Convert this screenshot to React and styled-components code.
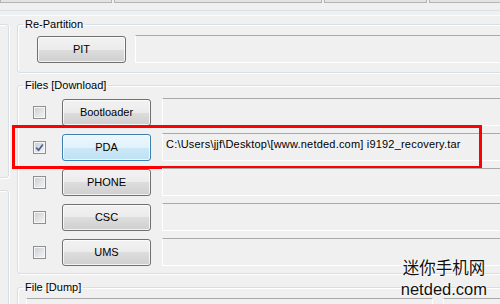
import React from 'react';
import styled, { createGlobalStyle } from 'styled-components';

const GlobalStyle = createGlobalStyle`
  html, body {
    margin: 0;
    padding: 0;
    background: #f0f0f0;
  }

  body {
    font-family: "Liberation Sans", Arial, sans-serif;
    font-size: 11px;
    color: #000;
  }
`;

const Window = styled.div`
  position: relative;
  width: 500px;
  height: 304px;
  overflow: hidden;
  background: #f0f0f0;
`;

const TabStrip = styled.div`
  display: flex;
  gap: 2px;
  height: 3px;
`;

const Tab = styled.div`
  flex: 0 0 ${(props) => props.w}px;
  box-sizing: border-box;
  height: 3px;
  background: #e3e3e3;
  border: 1px solid #b4b4b4;
  border-top: none;
`;

const PanelEdge = styled.div`
  margin-top: 7px;
  height: 4px;
  border-top: 1px solid #d8e1e8;
  border-bottom: 1px solid #fbfbfb;
`;

const Body = styled.div`
  display: flex;
  align-items: flex-start;
`;

const SideStrip = styled.div`
  flex: 0 0 9px;
  display: flex;
  flex-direction: column;
`;

const SideBox = styled.div`
  box-sizing: border-box;
  width: 19px;
  height: ${(props) => props.h}px;
  margin: ${(props) => props.top}px 0 0 -10px;
  border: 1px solid #d5dfe5;
  border-radius: 3px;
  box-shadow: inset 1px 1px 0 #fff, 1px 1px 0 #fff;
`;

const Content = styled.div`
  flex: 0 0 560px;
  margin: 1px 0 0 8px;
`;

const Group = styled.fieldset`
  margin: ${(props) => props.top || 0}px 0 0;
  padding: 0;
  min-width: 0;
  border: 1px solid #d5dfe5;
  border-radius: 3px;
  box-shadow: inset 1px 1px 0 #fff, 1px 1px 0 #fff;
`;

const Legend = styled.legend`
  margin-left: 5px;
  padding: 0 2px;
  font-size: 11px;
  line-height: 14px;
`;

const GroupBody = styled.div`
  display: flex;
  flex-direction: column;
  gap: 7px;
  padding: ${(props) => props.pad};
`;

const Row = styled.div`
  position: relative;
  display: flex;
  align-items: center;
  height: 28px;
`;

const CheckBox = styled.span`
  flex: 0 0 13px;
  box-sizing: border-box;
  display: flex;
  align-items: center;
  justify-content: center;
  width: 13px;
  height: 13px;
  margin-right: 16px;
  border: 1px solid #8e8f8f;
  background: linear-gradient(135deg, #c9cdd2, #f5f5f5);
  box-shadow: inset 0 0 0 1px #f6f6f6;
`;

const Button = styled.button`
  flex: 0 0 89px;
  height: 27px;
  padding: 0;
  font-family: "Liberation Sans", Arial, sans-serif;
  font-size: 11px;
  color: #000;
  border: 1px solid ${(props) => (props.focused ? '#3c7fb1' : '#707070')};
  border-radius: 3px;
  background: ${(props) => (props.focused
    ? 'linear-gradient(#ecf7fd, #e1f2fb 50%, #cbe8f8 50%, #bfe1f3)'
    : 'linear-gradient(#f2f2f2, #ebebeb 50%, #dddddd 50%, #cfcfcf)')};
  box-shadow: inset 0 0 0 1px rgba(255, 255, 255, 0.75);
`;

// the path text is drawn a little wider than the labels, like Tahoma
const TextField = styled.div`
  flex: 0 0 ${(props) => props.w || 600}px;
  box-sizing: border-box;
  height: 28px;
  margin-left: ${(props) => props.gap || 0}px;
  padding: 4px 3px;
  line-height: 13px;
  letter-spacing: 0.2px;
  white-space: nowrap;
  background: #f0f0f0;
  border: 1px solid #fff;
  border-top-color: #a9a9a9;
`;

const Highlight = styled.div`
  position: absolute;
  left: -21px;
  top: -8px;
  box-sizing: border-box;
  width: 470px;
  height: 44px;
  border: 3px solid #ff0000;
  pointer-events: none;
`;

const Watermark = styled.div`
  position: absolute;
  right: 13px;
  bottom: 4px;
  text-align: center;
  font-family: "Liberation Sans", "Noto Sans CJK SC", sans-serif;
  font-size: 16.5px;
  line-height: 21px;
  color: #111;
  text-shadow: 0 0 2px #fff, 0 0 2px #fff, 0 0 1px #fff;
`;

const Tick = () => (
  <svg width="9" height="9" viewBox="0 0 9 9">
    <path d="M1.2 4.6 L3.6 7.2 L7.8 1.4" fill="none" stroke="#4a5d93" strokeWidth="1.7" />
  </svg>
);

const files = [
  { name: 'Bootloader' },
  { name: 'PDA', checked: true, path: 'C:\\Users\\jjf\\Desktop\\[www.netded.com] i9192_recovery.tar' },
  { name: 'PHONE' },
  { name: 'CSC' },
  { name: 'UMS' },
];

export default function App() {
  return (
    <Window>
      <GlobalStyle />
      <TabStrip>
        <Tab w={112} />
        <Tab w={208} />
        <Tab w={103} />
        <Tab w={120} />
      </TabStrip>
      <PanelEdge />
      <Body>
        <SideStrip>
          <SideBox top={8} h={154} />
          <SideBox top={12} h={200} />
        </SideStrip>
        <Content>
          <Group>
            <Legend>Re-Partition</Legend>
            <GroupBody pad="4px 0 9px 19px">
              <Row>
                <Button>PIT</Button>
                <TextField gap={9} />
              </Row>
            </GroupBody>
          </Group>

          <Group top={5}>
            <Legend>Files [Download]</Legend>
            <GroupBody pad="6px 0 7px 15px">
              {files.map((f) => (
                <Row key={f.name}>
                  <CheckBox>{f.checked && <Tick />}</CheckBox>
                  <Button focused={f.checked}>{f.name}</Button>
                  <TextField gap={11}>{f.path}</TextField>
                  {f.checked && <Highlight />}
                </Row>
              ))}
            </GroupBody>
          </Group>

          <Group top={6}>
            <Legend>File [Dump]</Legend>
            <GroupBody pad="4px 0 9px 8px">
              <Row>
                <TextField w={407} />
                <TextField w={120} gap={10} />
              </Row>
            </GroupBody>
          </Group>
        </Content>
      </Body>
      <Watermark>
        迷你手机网
        <br />
        netded.com
      </Watermark>
    </Window>
  );
}
